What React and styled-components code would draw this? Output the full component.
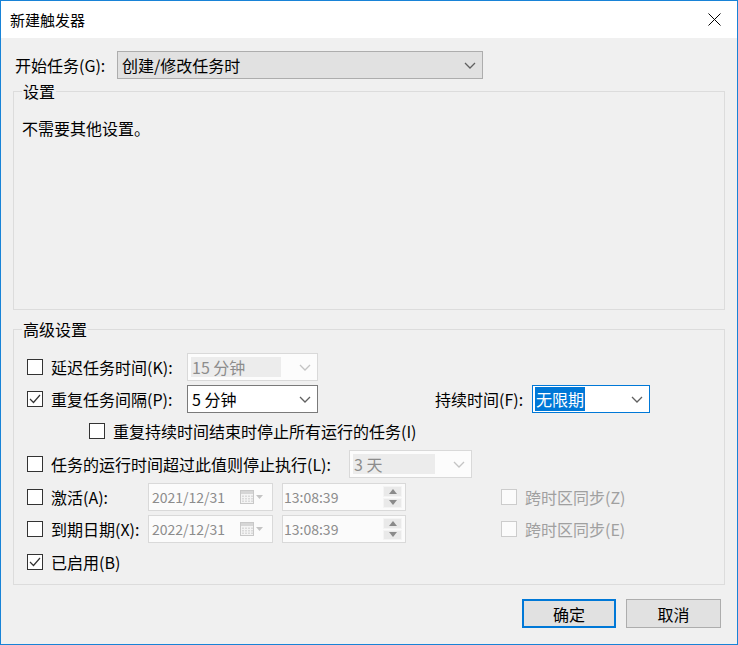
import React from "react";
import styled, { createGlobalStyle } from "styled-components";

const GlobalStyle = createGlobalStyle`
  html, body { margin: 0; padding: 0; background: #f0f0f0; }
  body {
    font-family: "Noto Sans CJK SC", "Noto Sans", sans-serif;
    font-size: 16px;
    color: #000;
  }
  * { box-sizing: border-box; }
`;

const Window = styled.div`
  width: 738px;
  height: 645px;
  border: 1px solid #1883d7;
  background: #f0f0f0;
  display: flex;
  flex-direction: column;
`;

const TitleBar = styled.div`
  height: 37px;
  background: #fff;
  display: flex;
  align-items: center;
  justify-content: space-between;
  padding-left: 9px;
`;

const Title = styled.div`
  font-size: 15px;
  line-height: 20px;
`;

const CloseBtn = styled.div`
  width: 46px;
  height: 37px;
  display: flex;
  align-items: center;
  justify-content: center;
`;

const Body = styled.div`
  flex: 1;
  padding: 13px 12px 0 12px;
  display: flex;
  flex-direction: column;
`;

const StartRow = styled.div`
  display: flex;
  align-items: center;
  height: 28px;
`;

const FieldLabel = styled.div`
  width: ${(p) => p.$w}px;
  margin-left: ${(p) => p.$ml || 0}px;
  line-height: 20px;
  white-space: nowrap;
  color: ${(p) => (p.$disabled ? "#a0a0a0" : "#000")};
`;

const Group = styled.fieldset`
  margin: ${(p) => p.$mt}px 0 0 0;
  padding: 0;
  border: 1px solid #dcdcdc;
  min-width: 0;
`;

const Legend = styled.legend`
  margin-left: 8px;
  padding: 0 1px;
  line-height: 20px;
  font-size: 16px;
`;

const SettingsContent = styled.div`
  min-height: 208px;
  padding: 17px 8px 0;
  line-height: 20px;
`;

const AdvancedContent = styled.div`
  padding: 14px 0 8px 13px;
  display: flex;
  flex-direction: column;
`;

const Row = styled.div`
  display: flex;
  align-items: center;
  height: 28px;
  margin-top: ${(p) => p.$mt || 0}px;
  padding-left: ${(p) => p.$indent || 0}px;
`;

const CheckWrap = styled.div`
  display: flex;
  align-items: center;
  width: ${(p) => (p.$w ? `${p.$w}px` : "auto")};
  margin-left: ${(p) => p.$ml || 0}px;
  flex-shrink: 0;
`;

const Box = styled.div`
  width: 16px;
  height: 16px;
  border: 1px solid ${(p) => (p.$disabled ? "#cccccc" : "#333333")};
  background: ${(p) => (p.$disabled ? "#fbfbfb" : "#fff")};
  display: flex;
  align-items: center;
  justify-content: center;
  flex-shrink: 0;
`;

const CheckText = styled.span`
  margin-left: 8px;
  line-height: 20px;
  white-space: nowrap;
  color: ${(p) => (p.$disabled ? "#a0a0a0" : "#000")};
`;

const variants = {
  readonly: { bg: "#e1e1e1", border: "#adadad", color: "#000", chev: "#606060" },
  edit: { bg: "#fff", border: "#7a7a7a", color: "#000", chev: "#606060" },
  focus: { bg: "#fff", border: "#0078d7", color: "#000", chev: "#606060" },
  disabled: { bg: "#fcfcfc", border: "#d9d9d9", color: "#8c8c8c", chev: "#c4c4c4" },
};

const Combo = styled.div`
  width: ${(p) => p.$w}px;
  height: 28px;
  border: 1px solid ${(p) => variants[p.$v].border};
  background: ${(p) => variants[p.$v].bg};
  color: ${(p) => variants[p.$v].color};
  display: flex;
  align-items: center;
  padding: 0 6px 0 ${(p) => (p.$v === "disabled" ? 3 : p.$v === "focus" ? 2 : 4)}px;
  flex-shrink: 0;
`;

const ComboText = styled.div`
  flex: 1;
  line-height: 20px;
  white-space: nowrap;
  background: ${(p) => (p.$v === "disabled" ? "#ececec" : "transparent")};
  padding-left: ${(p) => (p.$v === "disabled" ? 1 : 0)}px;
  margin-right: ${(p) => (p.$v === "disabled" ? 18 : 0)}px;
`;

const Highlight = styled.span`
  background: #0078d7;
  color: #fff;
  padding: 0 1px;
`;

const DateBox = styled.div`
  width: ${(p) => p.$w}px;
  height: 28px;
  margin-left: ${(p) => p.$ml || 0}px;
  border: 1px solid #d9d9d9;
  background: #fbfbfb;
  color: #8c8c8c;
  display: flex;
  align-items: center;
  padding: 0 2px 0 ${(p) => p.$pl}px;
  flex-shrink: 0;
`;

const DateText = styled.div`
  flex: 1;
  font-size: 14px;
  line-height: 20px;
  white-space: nowrap;
`;

const Spin = styled.div`
  width: 19px;
  height: 22px;
  display: flex;
  flex-direction: column;
  gap: 1px;
  margin-right: 1px;
`;

const SpinBtn = styled.div`
  flex: 1;
  background: #e9e9e9;
  border: 1px solid #f4f4f4;
  display: flex;
  align-items: center;
  justify-content: center;
`;

const Buttons = styled.div`
  display: flex;
  justify-content: flex-end;
  gap: 10px;
  margin-top: 14px;
  padding-right: 4px;
`;

const Button = styled.button`
  width: ${(p) => (p.$primary ? 94 : 95)}px;
  height: 29px;
  background: #e1e1e1;
  border: ${(p) => (p.$primary ? "2px solid #0078d7" : "1px solid #adadad")};
  font-family: inherit;
  font-size: 16px;
  color: #000;
  padding: 0;
  line-height: 20px;
`;

const Chevron = ({ color }) => (
  <svg width="12" height="7" viewBox="0 0 12 7">
    <polyline points="1,1 6,6 11,1" fill="none" stroke={color} strokeWidth="1.3" />
  </svg>
);

const Check = () => (
  <svg width="14" height="14" viewBox="0 0 14 14">
    <polyline points="2,7 5.5,10.5 12,3" fill="none" stroke="#333" strokeWidth="1.2" />
  </svg>
);

const Calendar = () => (
  <svg width="24" height="16" viewBox="0 0 24 16" style={{ marginRight: 6 }}>
    <rect x="0.5" y="1.5" width="13" height="13" fill="#f4f4f4" stroke="#c8c8c8" />
    <rect x="1" y="2" width="12" height="3" fill="#d6d6d6" />
    {[0, 1, 2].map((r) =>
      [0, 1, 2, 3].map((c) => (
        <rect key={`${r}-${c}`} x={2 + c * 3} y={6.5 + r * 2.5} width="2" height="1.5" fill="#dadada" />
      ))
    )}
    <polygon points="16,6 23,6 19.5,10" fill="#c4c4c4" />
  </svg>
);

const Tri = ({ up }) => (
  <svg width="8" height="5" viewBox="0 0 8 5">
    <polygon points={up ? "0,5 8,5 4,0" : "0,0 8,0 4,5"} fill="#8a8a8a" />
  </svg>
);

function CheckBox({ checked, disabled, label, w, ml }) {
  return (
    <CheckWrap $w={w} $ml={ml}>
      <Box $disabled={disabled}>{checked && <Check />}</Box>
      <CheckText $disabled={disabled}>{label}</CheckText>
    </CheckWrap>
  );
}

function Select({ w, v, children }) {
  return (
    <Combo $w={w} $v={v}>
      <ComboText $v={v}>{children}</ComboText>
      <Chevron color={variants[v].chev} />
    </Combo>
  );
}

function DatePicker({ value }) {
  return (
    <DateBox $w={125} $pl={3}>
      <DateText>{value}</DateText>
      <Calendar />
    </DateBox>
  );
}

function TimePicker({ value }) {
  return (
    <DateBox $w={124} $ml={9} $pl={1}>
      <DateText>{value}</DateText>
      <Spin>
        <SpinBtn>
          <Tri up />
        </SpinBtn>
        <SpinBtn>
          <Tri />
        </SpinBtn>
      </Spin>
    </DateBox>
  );
}

export default function App() {
  return (
    <>
      <GlobalStyle />
      <Window>
        <TitleBar>
          <Title>新建触发器</Title>
          <CloseBtn>
            <svg width="13" height="13" viewBox="0 0 13 13">
              <line x1="0.5" y1="0.5" x2="12.5" y2="12.5" stroke="#000" strokeWidth="1" />
              <line x1="12.5" y1="0.5" x2="0.5" y2="12.5" stroke="#000" strokeWidth="1" />
            </svg>
          </CloseBtn>
        </TitleBar>
        <Body>
          <StartRow>
            <FieldLabel $w={102} $ml={2}>开始任务(G):</FieldLabel>
            <Select w={366} v="readonly">创建/修改任务时</Select>
          </StartRow>

          <Group $mt={2}>
            <Legend>设置</Legend>
            <SettingsContent>不需要其他设置。</SettingsContent>
          </Group>

          <Group $mt={9}>
            <Legend>高级设置</Legend>
            <AdvancedContent>
              <Row>
                <CheckBox label="延迟任务时间(K):" w={160} />
                <Select w={131} v="disabled">15 分钟</Select>
              </Row>
              <Row $mt={4}>
                <CheckBox checked label="重复任务间隔(P):" w={160} />
                <Select w={131} v="edit">5 分钟</Select>
                <FieldLabel $w={97} $ml={117}>持续时间(F):</FieldLabel>
                <Select w={118} v="focus">
                  <Highlight>无限期</Highlight>
                </Select>
              </Row>
              <Row $mt={4} $indent={62}>
                <CheckBox label="重复持续时间结束时停止所有运行的任务(I)" />
              </Row>
              <Row $mt={5}>
                <CheckBox label="任务的运行时间超过此值则停止执行(L):" w={322} />
                <Select w={123} v="disabled">3 天</Select>
              </Row>
              <Row $mt={5}>
                <CheckBox label="激活(A):" w={121} />
                <DatePicker value="2021/12/31" />
                <TimePicker value="13:08:39" />
                <CheckBox disabled label="跨时区同步(Z)" ml={95} />
              </Row>
              <Row $mt={4}>
                <CheckBox label="到期日期(X):" w={121} />
                <DatePicker value="2022/12/31" />
                <TimePicker value="13:08:39" />
                <CheckBox disabled label="跨时区同步(E)" ml={95} />
              </Row>
              <Row $mt={5}>
                <CheckBox checked label="已启用(B)" />
              </Row>
            </AdvancedContent>
          </Group>

          <Buttons>
            <Button $primary>确定</Button>
            <Button>取消</Button>
          </Buttons>
        </Body>
      </Window>
    </>
  );
}
